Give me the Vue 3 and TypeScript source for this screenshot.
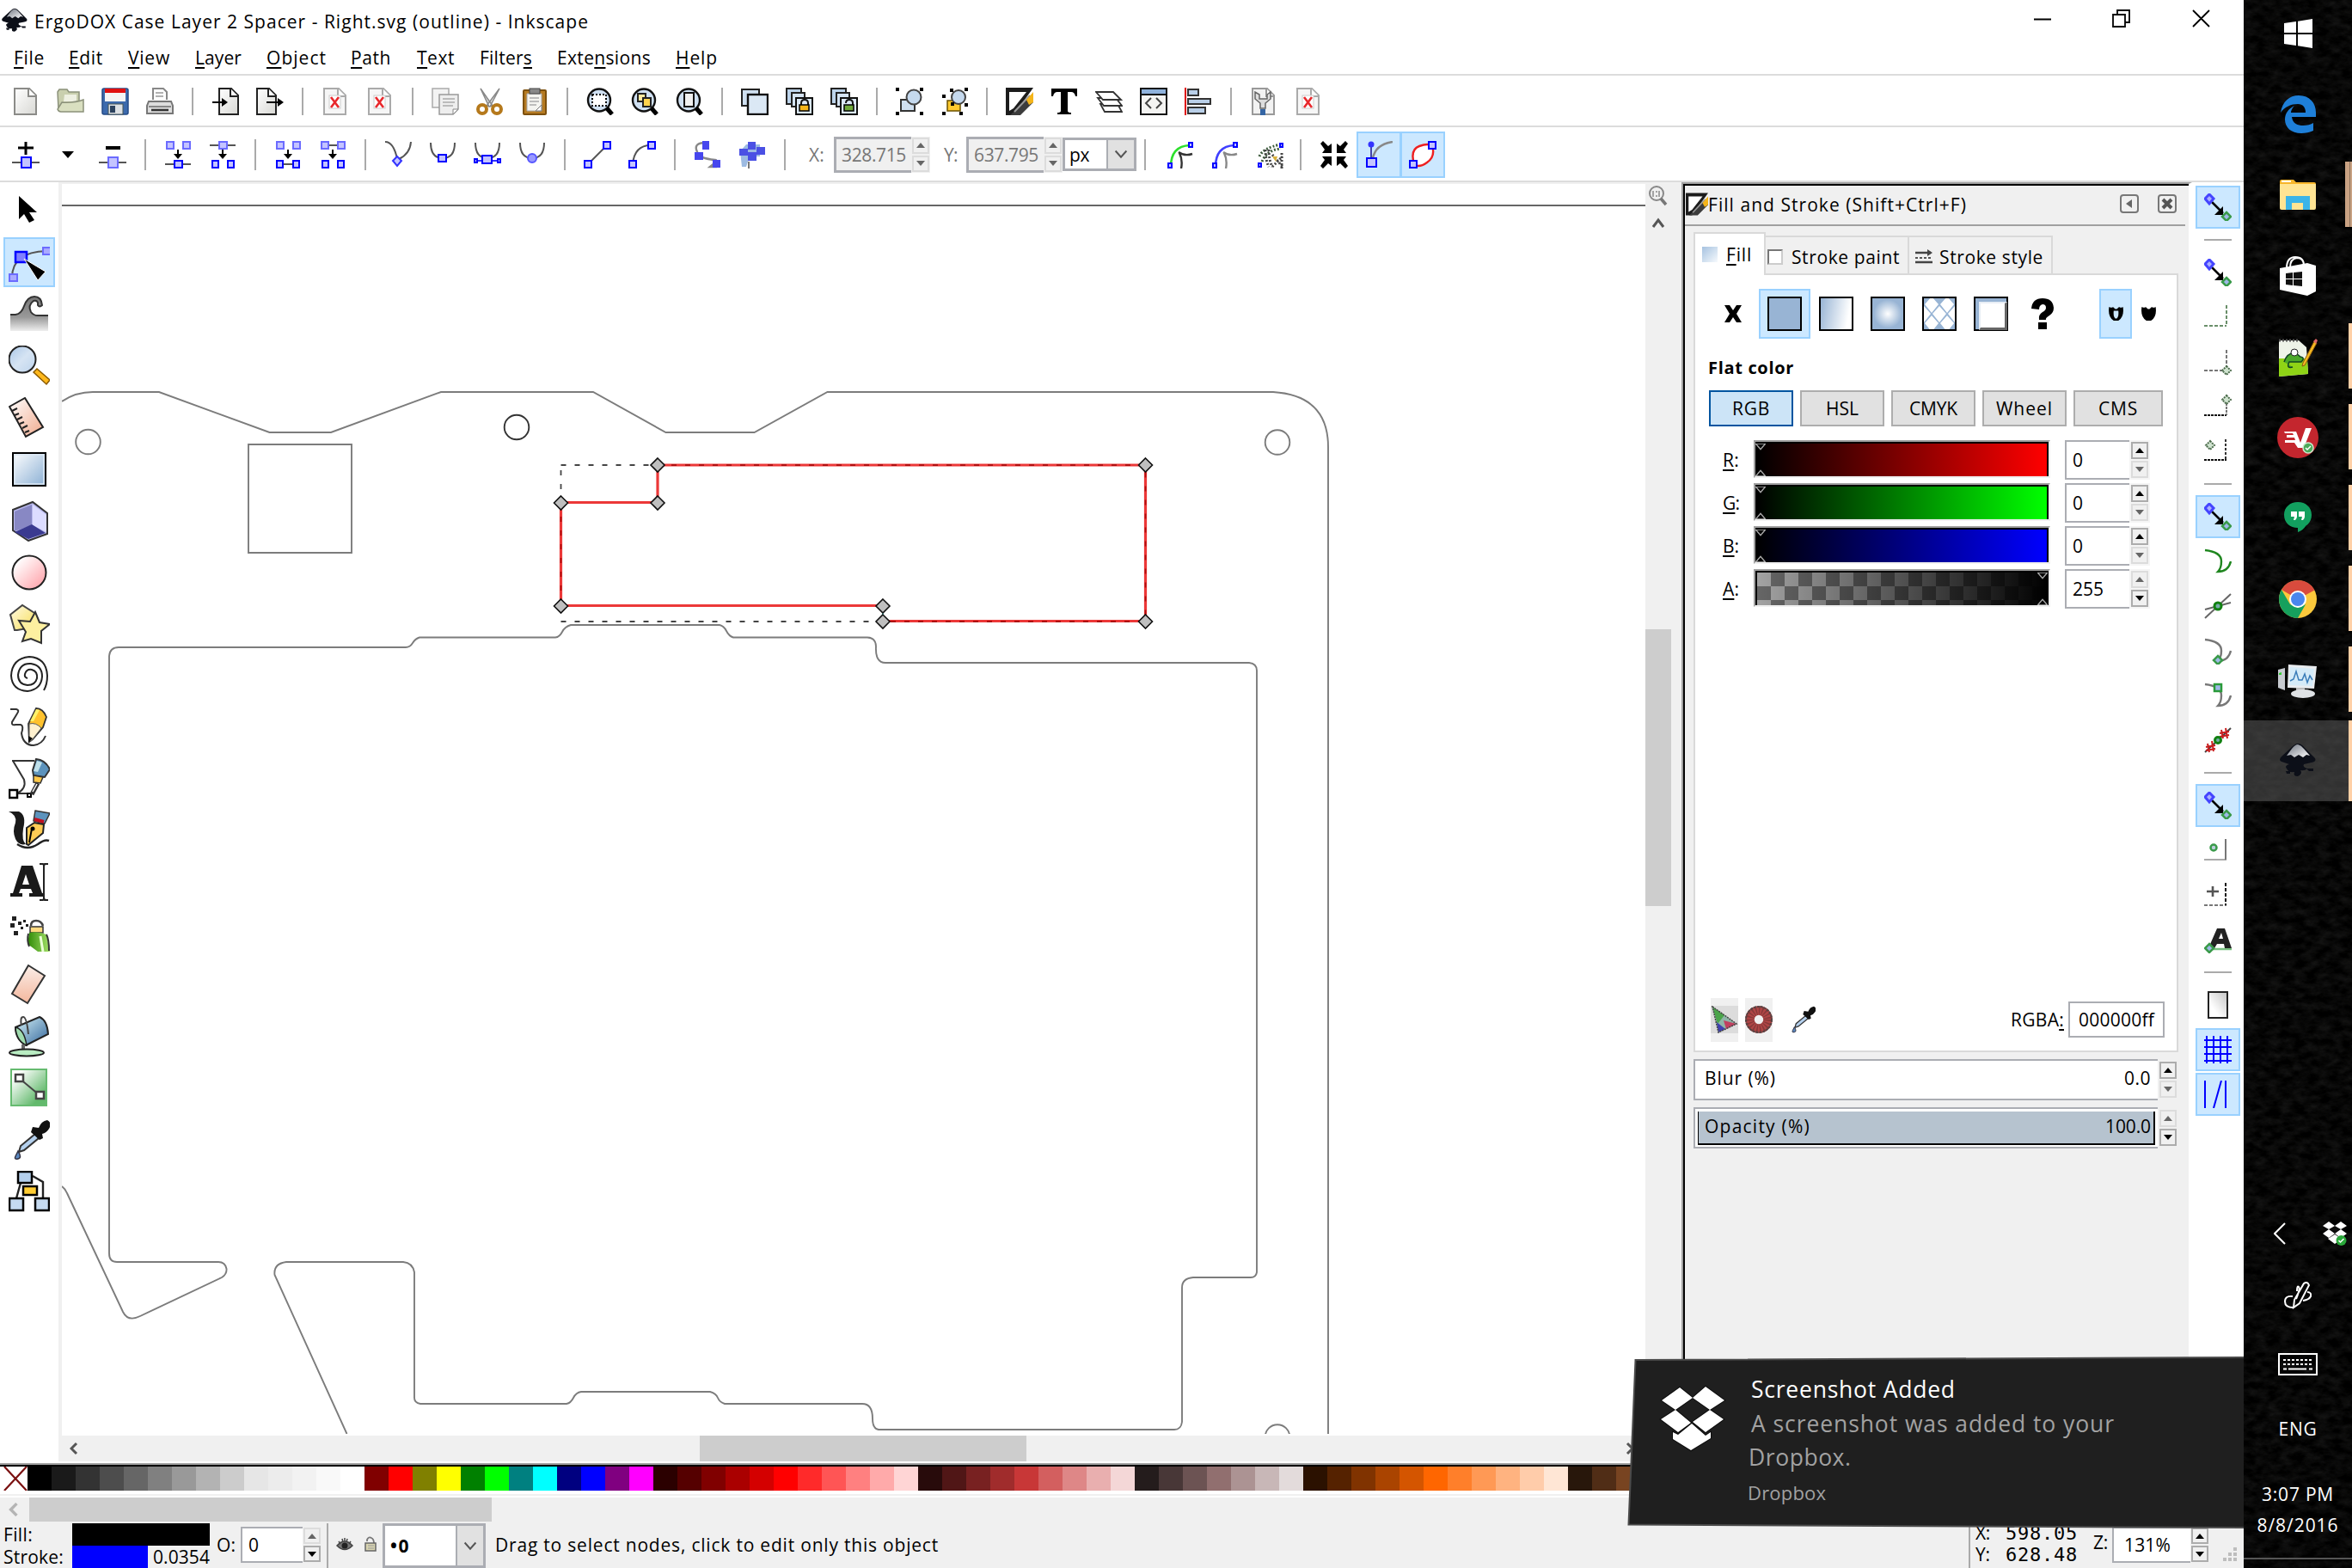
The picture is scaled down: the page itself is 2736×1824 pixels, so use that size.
<script setup lang="ts">
import type { Directive } from 'vue'

/* Tightens or loosens tracking so a label takes exactly the given width. */
const vFit: Directive<HTMLElement, number> = {
  mounted(el, binding) {
    const n = (el.textContent ?? '').trim().length
    const w = el.getBoundingClientRect().width
    el.style.letterSpacing = `${(binding.value - w) / n}px`
    el.style.width = `${binding.value}px`
  },
}

const B = '#0000ff'
const L = '#6b6bff'
const sq = (x: number, y: number, w: number, h: number, c = B) =>
  `<rect x="${x}" y="${y}" width="${w}" height="${h}" fill="#c4c4ff" stroke="${c}" stroke-width="2"/>`
const ln = (d: string, c = '#555', w = 2, extra = '') =>
  `<path d="${d}" fill="none" stroke="${c}" stroke-width="${w}" ${extra}/>`
const down = '<path d="M16 10v6" stroke="#000" stroke-width="2"/><path d="M11 15h10l-5 6z"/>'
const page = (c: string, f = 'url(#gPage)') =>
  `<path d="M3 1h17l8 8v22H3z" fill="${f}" stroke="${c}" stroke-width="2"/><path d="M19 1v9h9" fill="#fff" stroke="${c}" stroke-width="2"/>`
const redX = '<rect x="9" y="9" width="13" height="15" fill="#fff" stroke="#ccc"/><path d="M11 11l9 12M20 11l-9 12" stroke="#e8282c" stroke-width="2.600"/>'
const lens = '<circle cx="15" cy="14.500" r="13" fill="#cfe0f2" stroke="#111" stroke-width="2.400"/><path d="M24 24l6 7" stroke="#000" stroke-width="5"/>'
const clones = '<rect x="1" y="1" width="17" height="18" fill="#bcd3ea" stroke="#222" stroke-width="2"/><rect x="7" y="6" width="15" height="16" fill="#d5e4f3" stroke="#222" stroke-width="2"/><rect x="12" y="12" width="19" height="19" fill="#dbe8f5" stroke="#111" stroke-width="2"/>'

const icons: Record<string, string> = {
  new: page('#8b8b88'),
  open: '<path d="M1 5l2-3h9l2 3h12v20H2z" fill="#c9cfae" stroke="#8b917a" stroke-width="1.500"/><path d="M9 8h14v8H8z" fill="#eef0e2"/><path d="M6 17q14 1 25-3v14H5q-3 0-4-3z" fill="#d9dfc0" stroke="#8b917a" stroke-width="1.500"/>',
  save: '<rect x="1" y="1" width="30" height="30" rx="2" fill="#3c6aad" stroke="#234a86" stroke-width="1.500"/><rect x="4" y="1" width="24" height="15" fill="#f4f4f4"/><rect x="4" y="1" width="24" height="5" fill="#e01010"/><rect x="8" y="19" width="17" height="12" fill="#dce0e4" stroke="#455"/><rect x="10" y="21" width="6" height="8" fill="#2c425e"/>',
  print: '<path d="M8 14V1h12l4 4v9" fill="#fff" stroke="#888" stroke-width="2"/><path d="M11 6h9M11 10h9" stroke="#999" stroke-width="1.500"/><path d="M3 16h26l2 5v9H1v-9z" fill="#ddd" stroke="#777" stroke-width="2"/><path d="M3 22h26" stroke="#888" stroke-width="2"/><path d="M6 26h20" stroke="#333" stroke-width="2.500"/>',
  import: '<path d="M9 1h14l8 8v22H9z" fill="url(#gPage)" stroke="#222" stroke-width="2"/><path d="M22 1v9h9" fill="#fff" stroke="#222" stroke-width="2"/><path d="M1 17h14" stroke="#000" stroke-width="2"/><path d="M12 12l7 5-7 5z"/>',
  export: '<path d="M1 1h14l8 8v22H1z" fill="url(#gPage)" stroke="#222" stroke-width="2"/><path d="M14 1v9h9" fill="#fff" stroke="#222" stroke-width="2"/><path d="M12 17h16" stroke="#000" stroke-width="2"/><path d="M25 12l7 5-7 5z"/>',
  broken: page('#aaa', '#f6f6f6') + redX,
  copy: '<path d="M1 1h19v22H1z" fill="#f3f3f3" stroke="#aaa" stroke-width="1.500"/><path d="M9 8h22v17l-6 6H9z" fill="#eee" stroke="#999" stroke-width="1.500"/><path d="M13 13h14M13 17h14M13 21h12" stroke="#aaa" stroke-width="1.500"/><path d="M31 25h-6v6z" fill="#fff" stroke="#888"/>',
  cut: '<path d="M5 1l14 20-4 1zM27 1L12 21l4 1z" fill="#ddd" stroke="#888" stroke-width="1.500"/><circle cx="7" cy="25" r="5" fill="none" stroke="#b5791c" stroke-width="4"/><circle cx="24" cy="25" r="5" fill="none" stroke="#b5791c" stroke-width="4"/>',
  paste: '<rect x="3" y="3" width="26" height="28" rx="1" fill="#b67b22" stroke="#7d500d" stroke-width="2"/><path d="M7 7h17v20H7z" fill="#f4f4f0" stroke="#aaa"/><rect x="10" y="1" width="12" height="6" fill="#888" stroke="#444"/><path d="M10 12h11M10 16h11M10 20h8" stroke="#aaa" stroke-width="1.500"/><path d="M24 20v7h-7z" fill="#fff" stroke="#777"/>',
  zoomSel: lens + '<rect x="7" y="8" width="16" height="13" fill="#fff" stroke="#000" stroke-width="2" stroke-dasharray="2 2"/>',
  zoomDraw: lens + '<rect x="8" y="7" width="9" height="9" fill="#ffe9a0" stroke="#222" stroke-width="2"/><rect x="14" y="12" width="9" height="10" fill="#ffd34d" stroke="#222" stroke-width="2"/>',
  zoomPage: lens + '<rect x="10" y="6" width="11" height="16" fill="#f0f0f0" stroke="#111" stroke-width="2"/>',
  dup: '<rect x="1" y="2" width="20" height="19" fill="#cfe0f1" stroke="#222" stroke-width="2"/><rect x="8" y="8" width="23" height="23" fill="#dbe8f5" stroke="#111" stroke-width="2.400"/>',
  clone: clones + '<path d="M18 21v-3q0-4 4-4t4 4v3" fill="none" stroke="#111" stroke-width="2"/><rect x="16" y="20" width="11" height="7" fill="#f5b51a" stroke="#000" stroke-width="1.500"/>',
  unlink: clones + '<path d="M18 18q0-4 4-4t4 4v3" fill="none" stroke="#111" stroke-width="2"/><rect x="16" y="20" width="11" height="7" fill="#6fa83a" stroke="#000" stroke-width="1.500"/>',
  group: '<rect x="6" y="14" width="16" height="13" fill="#cfe0f1" stroke="#333" stroke-width="2"/><circle cx="21" cy="11" r="8.500" fill="#c5d9ee" stroke="#444" stroke-width="2"/><path d="M0 0h4v4H0zM28 0h4v4h-4zM0 28h4v4H0zM28 28h4v4h-4z"/>',
  ungroup: '<rect x="8" y="15" width="15" height="12" fill="#ffc92e" stroke="#6b5200" stroke-width="1.500"/><circle cx="21" cy="11" r="8" fill="#c5d9ee" stroke="#444" stroke-width="2"/><path d="M2 8h4v4H2zM11 1h4v4h-4zM28 0h4v4h-4zM28 18h4v4h-4zM2 28h4v4H2zM22 28h4v4h-4zM12 17h4v4h-4z"/>',
  fill: '<path d="M0 0h32L9 32H0z" fill="#1c1c1c"/><path d="M4 5h20L9 24l-5 3z" fill="#fff"/><path d="M32 6v11L17 32H5z" fill="#3c3c3c"/><path d="M28 9L10 28" stroke="#999" stroke-width="2"/><path d="M32 5v12l-5 3-3-6z" fill="#f5b51a"/>',
  text: '<path d="M1 1h30v9h-2q-1-5-5-5h-4v22q0 2 4 2v2H8v-2q4 0 4-2V5H8q-4 0-5 5H1z"/>',
  layers: '<g fill="#fff" stroke="#333" stroke-width="1.800"><path d="M6 19h20l5 9H11z"/><path d="M3 12h21l7 9H10z"/><path d="M1 5h20l9 9H9z"/></g>',
  xml: '<rect x="1" y="1" width="30" height="30" fill="#f4f4f2" stroke="#111" stroke-width="2"/><rect x="2" y="2" width="28" height="5" fill="#8fb2dc"/><path d="M1 8h30" stroke="#111" stroke-width="2"/><path d="M13 12l-6 6 6 6M19 12l6 6-6 6" fill="none" stroke="#444" stroke-width="2"/>',
  align: '<path d="M1 0v32" stroke="#d00" stroke-width="2"/><g fill="#b9cfe8" stroke="#333" stroke-width="2"><rect x="4" y="2" width="12" height="7"/><rect x="4" y="13" width="26" height="6"/><rect x="4" y="23" width="20" height="7"/></g>',
  prefs: page('#999', '#f2f2f2') + '<path d="M6 5v8l6 5v6h6v-6l6-5V5l-4 3v5h-9V8z" fill="#ddd" stroke="#666" stroke-width="1.500"/><rect x="12" y="25" width="6" height="7" fill="#3465a4"/>',

  nAdd: ln('M16 1v15M7 8h18', '#000', 3) + ln('M0 25h32') + sq(11, 19, 11, 12),
  nDel: ln('M8 8h17', '#000', 4) + ln('M0 25h32') + sq(11, 19, 11, 12, L),
  nJoin: sq(3, 1, 8, 8, L) + sq(22, 1, 8, 8, L) + down + ln('M1 27h30') + sq(12, 23, 9, 8),
  nBreak: ln('M1 5h30') + sq(12, 1, 9, 8, L) + down + sq(4, 23, 7, 8) + sq(22, 23, 7, 8),
  nJoinSeg: sq(3, 1, 8, 8, L) + sq(22, 1, 8, 8, L) + down + ln('M10 27h12') + sq(3, 23, 7, 8) + sq(22, 23, 7, 8),
  nDelSeg: ln('M10 5h12') + sq(3, 1, 8, 8, L) + sq(22, 1, 8, 8, L) + down + sq(4, 23, 7, 8) + sq(22, 23, 7, 8),
  cusp: ln('M1 1q10 0 14 20M17 21q13-6 14-20') + '<path d="M15 18l5 5-5 6-5-6z" fill="#c4c4ff" stroke="#33f" stroke-width="2"/>',
  smooth: ln('M2 2q0 18 14 18T30 2') + sq(11, 16, 9, 8),
  symm: ln('M2 2q0 18 14 18T30 2') + ln('M3 23h26', '#33f') + sq(10, 17, 11, 9) + sq(1, 21, 3, 4) + sq(28, 21, 3, 4),
  auto: ln('M2 2q0 18 14 18T30 2') + '<circle cx="16" cy="20" r="5" fill="#99f" stroke="#55f" stroke-width="2"/>',
  seg: ln('M5 27L27 5') + sq(1, 23, 8, 8) + sq(23, 1, 8, 8),
  curve: ln('M5 27Q7 5 26 5') + sq(1, 23, 8, 8) + sq(23, 1, 8, 8),
  o2p: ln('M14 2Q1 2 3 10t10 10 12 2-6 8h8', '#888', 2.4) + '<path d="M10 0h8v10h-8zM1 13h10v9H1zM22 22h9v9h-9z" fill="#4646ee"/>',
  s2p: '<path d="M9 4h16v14H13l-4 12H4L2 12z" fill="#9dbbe2"/><path d="M11 1h9v9h-9zM21 7h10v9H21zM1 9h10v8H1zM11 13h10v10H11z" fill="#4a50e4"/><path d="M12 24v8" stroke="#777" stroke-width="2"/>',
  e1: ln('M4 30Q4 6 26 5', '#2ee02e', 2.6) + ln('M13 13q7 5 16 2M14 14q4 8 2 18', '#333', 2.4) + sq(1, 26, 4, 5) + sq(25, 2, 4, 5),
  e2: ln('M4 30Q4 6 26 5', '#4040ff', 2.6) + ln('M13 13q7 5 16 2M14 14q4 8 2 18', '#888', 2.4) + sq(1, 26, 4, 5) + sq(25, 2, 4, 5),
  e3: ln('M3 18Q7 8 28 4M6 24Q12 10 28 9', '#3b5a3b', 3, 'stroke-dasharray="2 2"') + ln('M10 10q0 12 4 20M14 10q0 12 4 20M18 16l12 14M18 30l12-12M29 14v18', '#444', 3, 'stroke-dasharray="2 2"') + sq(2, 26, 3, 4) + sq(27, 3, 3, 4) + '<path d="M18 18h6l-2 6z" fill="#d8b03a"/>',
  e4: '<path d="M0 3l3-3 6 6 4-3v11H2l3-4zM32 3l-3-3-6 6-4-3v11h11l-3-4zM0 29l3 3 6-6 4 3V18H2l3 4zM32 29l-3 3-6-6-4 3V18h11l-3 4z"/>',
  e5: ln('M9 20Q12 4 32 1', '#888', 2.5) + ln('M7 4v18', '#44a', 2) + sq(2, 20, 11, 10) + '<circle cx="7" cy="4" r="3.500" fill="#33f"/>',
  e6: '<path d="M6 27Q1 10 12 6t15 0q4 12-6 19t-15 2z" fill="#fff" stroke="#ee2020" stroke-width="2.400"/>' + sq(1, 23, 8, 8) + sq(23, 1, 8, 8),
}

const tools: string[] = [
  '<path d="M12 6v27l6-6 6 10 6-3-6-9h9z"/>',
  '<path d="M4 42Q4 12 44 11" fill="none" stroke="#555" stroke-width="2"/><rect x="40" y="7" width="9" height="8" fill="#aaaaff" stroke="#6b6bff" stroke-width="2"/><rect x="1" y="38" width="9" height="8" fill="#aaaaff" stroke="#6b6bff" stroke-width="2"/><rect x="8" y="12" width="13" height="12" fill="#8080ff" stroke="#00f" stroke-width="2.500"/><path d="M18 20l25 15-9 10z" stroke="#fff"/>',
  '<path d="M2 24h6Q15 23 18 14 22 3 30 3q8 0 9 10-3 3-5 0 1-6-5-5-7 5-3 13 3 4 8 4h12v18H2z" fill="url(#gWave)"/><path d="M2 24h6Q15 23 18 14 22 3 30 3q8 0 9 10-3 3-5 0 1-6-5-5-7 5-3 13 3 4 8 4h12" fill="none" stroke="#333" stroke-width="2"/>',
  '<path d="M29 31l4-4 15 13-4 5z" fill="#ffb81c" stroke="#8a5a00" stroke-width="1.500"/><circle cx="16" cy="16" r="15.500" fill="url(#gBlue)" stroke="#222" stroke-width="2"/>',
  '<path d="M1 11l18-10 21 34-20 11z" fill="url(#gPeach)" stroke="#222" stroke-width="2"/><path d="M4 16l6-3M7 21l5-2M10 26l6-3M13 31l5-2M16 36l6-3M19 41l5-2" stroke="#222" stroke-width="2"/>',
  '<rect x="5" y="5" width="38" height="38" fill="url(#gBlue2)" stroke="#000" stroke-width="2"/><rect x="7" y="7" width="34" height="34" fill="none" stroke="#dde9f5" stroke-width="1.500"/>',
  '<path d="M5 11l23-9 17 13v24l-22 8L5 35z" fill="#b9b9ee" stroke="#333" stroke-width="2"/><path d="M7 13l20-8v24L7 36z" fill="#8888c4"/><path d="M28 5l16 12v20L28 29z" fill="#dcdcff"/><path d="M7 37l20-9 16 10-20 7z" fill="#3a3a90"/>',
  '<circle cx="24" cy="24" r="19.500" fill="url(#gPink)" stroke="#222" stroke-width="2"/>',
  '<path d="M2 13L16 2l14 9-2 17-18 3H7z" fill="url(#gYel)" stroke="#444" stroke-width="2"/><path d="M31 10l5 12 12 2-10 8v14l-12-5-10 3 4-11-8-13 13 1z" fill="#fdf0a0" stroke="#333" stroke-width="2"/>',
  '<path d="M22 27q-4-1-3-5 2-6 8-5 7 2 6 10-2 8-11 8-11-1-11-12Q13 9 26 10q13 2 13 15-1 15-17 17Q4 41 3 24 4 4 24 2q20 1 21 22 0 10-4 17" fill="none" stroke="#222" stroke-width="2" stroke-linejoin="round"/>',
  '<path d="M2 3h7q4 1 1 5L4 18q-1 4 4 3h6q4 1 1 10 2 14 14 14 10-1 14-11" fill="none" stroke="#333" stroke-width="2"/><path d="M32 2q8 0 12 10L40 24 28 38l-4 3-1-21z" fill="#ffc22e" stroke="#333" stroke-width="1.800"/><path d="M24 20q8-2 14 5L27 39l-3 2z" fill="#fff1cf" stroke="#555"/><path d="M23 34l5 3-5 5z"/><path d="M32 3l-7 14 4 0 7-13z" fill="#fff36b"/>',
  '<path d="M4 3h26M5 3l13 22q3 10-8 16h20" fill="none" stroke="#333" stroke-width="2"/><rect x="1" y="37" width="9" height="9" fill="#fff" stroke="#000" stroke-width="2.500"/><rect x="22" y="41" width="4" height="4" fill="#fff" stroke="#000" stroke-width="2"/><path d="M32 1q11 1 16 12l-6 9-13-2-1-6z" fill="#5c93bd" stroke="#333" stroke-width="2"/><path d="M33 3l-4 12 5 1 5-11z" fill="#bfe0ea"/><path d="M29 20l11 2-3 7-8-1z" fill="#ffc84a" stroke="#333" stroke-width="1.500"/><path d="M34 29l-7 13" stroke="#333" stroke-width="5"/><path d="M33 30l-5 9" stroke="#fff" stroke-width="1.500"/>',
  '<path d="M0 2h12q9 4 5 20-2 14 3 18-8 2-12-6-4-9 0-19Q10 6 0 2z" fill="#1a1a1a"/><path d="M10 40q12 8 24 0 8-6 13-4" fill="none" stroke="#222" stroke-width="2.500"/><path d="M31 1l17 3-6 12-13-3z" fill="#5c93bd" stroke="#333" stroke-width="1.500"/><path d="M30 11l11 3" stroke="#c01020" stroke-width="4"/><path d="M21 21l9-6 11 2-1 10-17 14-2-1z" fill="#ffcc55" stroke="#222" stroke-width="2"/><path d="M27 22l-3 16" stroke="#000" stroke-width="2"/><circle cx="28" cy="22" r="2.500"/>',
  '<path d="M2 41v-4h3L15 5h13l11 32h3v4H24v-4h4l-2-5H14l-2 5h4v4zM16 27h8l-4-12z" fill="#1a1a1a"/><path d="M36 3h4q1 1 1 2t1-2h4M36 45h4q1-1 1-2t1 2h4M41 5v38" fill="none" stroke="#222" stroke-width="2"/>',
  '<path d="M4 4h5v5H4zM2 12h5v5H2zM6 21h5v5H6zM11 10h4v4h-4zM14 16h3v3h-3zM17 8h3v3h-3zM20 13h3v3h-3z" fill="#222"/><path d="M26 15q0-6 6-6t8 6" fill="none" stroke="#444" stroke-width="2.500"/><path d="M25 16h15v7H25z" fill="#ffd980" stroke="#333" stroke-width="1.500"/><path d="M24 23q10-2 20 2l4 20H34L22 36z" fill="url(#gGreen)"/><path d="M23 24q-2 8 1 15M44 25q3 6 3 19" fill="none" stroke="#333" stroke-width="2"/><path d="M37 27l3 18" stroke="#eaffd5" stroke-width="3"/>',
  '<path d="M23 1l19 12-20 32L4 34z" fill="url(#gPeach2)" stroke="#333" stroke-width="2"/>',
  '<path d="M8 13l28-12q9 4 10 20L20 34Q8 27 8 13z" fill="url(#gCan)" stroke="#222" stroke-width="2"/><path d="M8 13q10 2 13 21Q9 29 8 13z" fill="#9fdcae" stroke="#222" stroke-width="1.500"/><path d="M15 11q-2-10 2-10t6 20" fill="none" stroke="#444" stroke-width="2"/><path d="M17 33v8" stroke="#666" stroke-width="4"/><ellipse cx="21" cy="42.500" rx="20" ry="4" fill="#b9ecc2" stroke="#222" stroke-width="2"/>',
  '<rect x="3" y="2" width="41" height="42" fill="url(#gGrad)" stroke="#66bb70" stroke-width="2"/><path d="M12 12l24 20" stroke="#444" stroke-width="2"/><rect x="8" y="8" width="9" height="8" fill="#fff" stroke="#444" stroke-width="2.500"/><rect x="32" y="28" width="9" height="8" fill="#fff" stroke="#444" stroke-width="2.500"/>',
  '<path d="M31 17l4 5-17 14-6 2 2-7z" fill="#b4d0ee" stroke="#333" stroke-width="2"/><path d="M28 9l7 1q3-8 10-9 6 3 2 10-3 5-8 6l1 5-4 2-10-9z" fill="#111"/><path d="M11 37q5 8 0 9t-3-3z" fill="#5a88c0" stroke="#334" stroke-width="1.500"/>',
  '<path d="M14 14L9 32M28 6l12 7v20" fill="none" stroke="#222" stroke-width="2.400"/><g stroke="#000" stroke-width="2.500"><rect x="11" y="1" width="16" height="13" fill="#b4cfec"/><rect x="17" y="18" width="16" height="10" fill="#ffcc33"/><rect x="1" y="32" width="16" height="14" fill="#c5daf0"/><rect x="31" y="32" width="16" height="14" fill="#c5daf0"/></g>',
]

const gn = (x: number, y: number) => `<path d="M${x} ${y - 5}l5 5-5 5-5-5z" fill="#9fb8e8" stroke="#3a9a4a" stroke-width="2.500"/>`
const dg = (x: number, y: number) => `<path d="M${x} ${y - 5}l5 5-5 5-5-5z" fill="#cfe3cf" stroke="#4a6a4a" stroke-width="2" stroke-dasharray="2 1"/>`
const snapMain = '<path d="M9 10l13 13" stroke="#000" stroke-width="2.500"/><path d="M22 15v10H12z"/><path d="M6 1l5 5-5 6-5-6z" fill="#aab0ff" stroke="#4444ff" stroke-width="3"/>' + gn(26, 27)
const corner = (c: string) => ln('M0 26h26M26 2v24', c, 2, 'stroke-dasharray="4 2"')
const hook = (c: string) => ln('M1 3Q20 5 20 16q0 8-4 12 12 0 15-12', c, 2.4)
type Snap = { svg?: string; on?: boolean }
const snaps: Snap[] = [
  { svg: snapMain, on: true }, {},
  { svg: snapMain },
  { svg: corner('#6a8f6a') },
  { svg: corner('#777') + dg(26, 26) },
  { svg: ln('M0 26h26', '#111', 2, 'stroke-dasharray="3 1"') + ln('M26 12v14', '#777', 2, 'stroke-dasharray="3 1"') + dg(26, 8) },
  { svg: ln('M0 26h26', '#111', 2, 'stroke-dasharray="3 1"') + ln('M25 2v24', '#333', 2, 'stroke-dasharray="3 2"') + dg(7, 9) }, {},
  { svg: snapMain, on: true },
  { svg: hook('#1f861f') },
  { svg: ln('M1 30L31 2M1 20l30-8', '#666') + '<circle cx="16" cy="16" r="4" fill="#7aa" stroke="#118011" stroke-width="3"/>' },
  { svg: hook('#777') + gn(16, 27) },
  { svg: hook('#777') + '<rect x="12" y="3" width="8" height="8" fill="#9fb8e8" stroke="#2a9a3a" stroke-width="2.500"/>' },
  { svg: ln('M1 30L31 2', '#444') + ln('M4 20l2 10M9 17l2 12M2 24l11-2M2 28l11-2M20 4l2 10M25 2l2 12M18 8l11-2M18 12l11-2', '#c81e1e', 2) + '<circle cx="16" cy="16" r="3.500" fill="#7aa" stroke="#118011" stroke-width="3"/>' }, {},
  { svg: snapMain, on: true },
  { svg: ln('M0 27h26', '#aaa') + ln('M25 3v24', '#777') + '<circle cx="11" cy="13" r="3.500" fill="#bcd" stroke="#3a9a4a" stroke-width="2.500"/>' },
  { svg: ln('M0 28h26', '#777', 2, 'stroke-dasharray="4 2"') + ln('M25 2v26', '#111', 2, 'stroke-dasharray="4 2"') + ln('M3 12h14M10 6v12', '#555', 2.6) },
  { svg: '<path d="M4 27h28" stroke="#77c080" stroke-width="2.500"/><path d="M5 26L15 3h9l8 23h-8l-1-5h-8l-3 5zM17 15h5l-2-7z" fill="#222"/>' + gn(6, 26) }, {},
  { svg: '<rect x="5" y="1" width="22" height="30" fill="url(#gPage2)" stroke="#222" stroke-width="2"/>' },
  { svg: ln('M0 5h32M0 13h32M0 21h32M0 29h32M3 0v32M11 0v32M19 0v32M27 0v32', B), on: true },
  { svg: ln('M1 0v32M25 0v32M20 0L11 32', B), on: true },
]

const menus: [string, string, string, number, number][] = [
  ['', 'F', 'ile', 36, 28], ['', 'E', 'dit', 40, 29], ['', 'V', 'iew', 49, 29], ['', 'L', 'ayer', 54, 29],
  ['', 'O', 'bject', 70, 28], ['', 'P', 'ath', 47, 30], ['', 'T', 'ext', 44, 29], ['Filter', 's', '', 61, 29],
  ['Exte', 'n', 'sions', 109, 29], ['', 'H', 'elp', 49, 0],
]

const bar1 = ['new', 'open', 'save', 'print', '|', 'import', 'export', '|', 'broken', 'broken', '|', 'copy', 'cut', 'paste', '|',
  'zoomSel', 'zoomDraw', 'zoomPage', '|', 'dup', 'clone', 'unlink', '|', 'group', 'ungroup', '|', 'fill', 'text', 'layers', 'xml', 'align', '|', 'prefs', 'broken']
const bar2 = ['nAdd', 'v', 'nDel', '|', 'nJoin', 'nBreak', '|', 'nJoinSeg', 'nDelSeg', '|', 'cusp', 'smooth', 'symm', 'auto', '|', 'seg', 'curve', '|', 'o2p', 's2p', '|']

const palette = ('000 1a1a1a 333 4d4d4d 666 808080 999 b3b3b3 ccc e6e6e6 ececec f2f2f2 f9f9f9 fff 800000 f00 808000 ff0 008000 0f0 008080 0ff 000080 00f 800080 f0f '
  + '2b0000 550000 800000 a00 d40000 f00 ff2a2a f55 ff8080 faa ffd5d5 280b0b 501616 782121 a02c2c c83737 d35f5f de8787 e9afaf f4d7d7 '
  + '241c1c 483737 6c5353 916f6f ac9393 c8b7b7 e3dbdb 2b1100 520 803300 a40 d45500 f60 ff7f2a f95 ffb380 fca ffe6d5 28170b 502d16 784421').split(' ')

const modes: [string, number][] = [['RGB', 44], ['HSL', 38], ['CMYK', 56], ['Wheel', 66], ['CMS', 46]]
const channels = [
  { k: 'R', c: 'linear-gradient(90deg,#000,#f00)', v: '0', w: 12 },
  { k: 'G', c: 'linear-gradient(90deg,#000,#0f0)', v: '0', w: 12 },
  { k: 'B', c: 'linear-gradient(90deg,#000,#00f)', v: '0', w: 12 },
  { k: 'A', c: 'linear-gradient(90deg,rgba(0,0,0,0),#000), conic-gradient(#666 25%,#a3a3a3 0 50%,#666 0 75%,#a3a3a3 0) 0 0/32px 32px', v: '255', w: 36 },
]

const nodes: [number, number][] = [[765, 541], [1332.5, 541], [1332.5, 723], [1027, 723], [1027, 705], [652.5, 705], [652.5, 585], [765, 585]]

type Task = { svg: string; lit?: boolean; on?: boolean }
const tasks: Task[] = [
  { svg: '<path d="M8 12l14-2v13H8zM24 9.700L41 7v16H24zM8 25h14v13L8 36zM24 25h17v16l-17-2.700z" fill="#fff"/>' },
  { svg: '<path d="M4 22C6 9 14 2 25 2c13 0 20 9 20 20v5H17c1 8 7 10 13 10 5 0 9-1 12-3v9c-4 2-9 3-14 3C16 46 9 39 9 30c0-8 5-13 11-16-3 3-4 6-4 8h17c0-6-3-10-9-10C16 12 9 15 4 22z" fill="#1e7fd8"/>' },
  { svg: '<path d="M3 8q0-2 2-2h14l3 3h21q2 0 2 2v5H3z" fill="#f7b52a"/><path d="M3 11h42v28q0 2-2 2H5q-2 0-2-2z" fill="#ffe493"/><path d="M10 41V25h28v16h-8v-8H17v8z" fill="#3bb4e8"/><path d="M5 8h11" stroke="#fff" stroke-width="2"/>', lit: true },
  { svg: '<path d="M3 15l32-6 10 3v30l-10 5-32-7z" fill="#fff"/><path d="M11 15q0-13 10-13t10 10M15 14q0-10 8-11 8 0 8 9" fill="none" stroke="#fff" stroke-width="2"/><path d="M10 21l8-1v7h-8zM19 20l10-1v8H19zM10 28h8v7l-8-1zM19 28h10v8l-10-1z" fill="#111"/>' },
  { svg: '<path d="M2 5h23l9 8 2 31-34 3z" fill="#eef3e8"/><path d="M2 26h33l1 18-34 3z" fill="#8fd416"/><path d="M2 5h22" stroke="#555" stroke-width="3" stroke-dasharray="2 2"/><path d="M8 30q4-12 14-10l5 4q6 1 1 6H14q-4 8 4 6" fill="#4ba829" stroke="#142" stroke-width="1.500"/><circle cx="20" cy="19" r="4" fill="#fff" stroke="#222"/><path d="M43 6l3 2-14 26-3 1 1-4z" fill="#f5b820" stroke="#8b5a10"/><path d="M42 6l3-3 2 2-2 4z" fill="#d66"/>', lit: true },
  { svg: '<circle cx="24" cy="24" r="24" fill="#c4262e"/><path d="M8 17h14l5 13 6-17h7l-9 23h-7l-4-6H9v-3h12l-1-3h-9v-3h8l-1-2H9z" fill="#fff"/><circle cx="36" cy="36" r="6" fill="#4ca95a" stroke="#cde8d0" stroke-width="1.500"/><path d="M33 36l2 2 4-4" fill="none" stroke="#fff" stroke-width="1.500"/>', lit: true },
  { svg: '<path d="M24 5c9 0 16 6 16 15S33 35 25 35v5l-1-5C15 35 8 29 8 20S15 5 24 5z" fill="#12a05f"/><path d="M24 33h9q-3 5-9 7z" fill="#12a05f"/><path d="M16 16h7v6q0 2-2 4h-2l1-4h-4zM25 16h7v6q0 2-2 4h-2l1-4h-4z" fill="#fff"/>', lit: true },
  { svg: '<circle cx="24" cy="24" r="22" fill="#fbc93c"/><path d="M24 24L5 13a22 22 0 0 1 38.500 0.500z" fill="#d94b3d"/><path d="M5 13a22 22 0 0 0 19 33l9-16-9 4-9-4z" fill="#16a05d"/><circle cx="24" cy="24" r="10" fill="#fff"/><circle cx="24" cy="24" r="8" fill="#4a86ee"/>', lit: true },
  { svg: '<path d="M1 12l8-2v26l-8-3z" fill="#c7cbd0"/><path d="M13 6l33 2-3 26-31-1z" fill="#e9ecef"/><path d="M15 9l28 2-2 20-27-1z" fill="#d5ebf8"/><path d="M15 25l4-2 3-9 3 10 4 0 3-7 3 10 3-8 3 5" fill="none" stroke="#3a7cb8" stroke-width="1.500"/><path d="M22 33h10v5H22z" fill="#bbb"/><ellipse cx="30" cy="40" rx="14" ry="5" fill="#dfe2e5"/><path d="M2 16l3-1v3l-3 0z" fill="#3c3"/>', lit: true },
  { svg: '<path d="M24 4q4 0 8 5l12 12q2 4-4 5l-9 2q-2 3 4 5-3 3-8 2 3 4-3 7-6 0-4-5-7 1-9-4-3-3 3-5L5 25q-4-2 0-6L17 8q4-4 7-4z" fill="#0c0f18"/><path d="M24 5q4 1 7 5l7 8-4-1-4 3-5-3-5 3-4-3-5 1 6-8q4-5 7-5z" fill="url(#gInk)"/><path d="M34 33h8v3h-5zM10 36h5v3h-4z" fill="#0c0f18"/>', lit: true, on: true },
]
</script>

<template>
  <div class="desktop">
    <svg class="defs" width="0" height="0">
      <defs>
        <linearGradient id="gPage" x1="0" y1="0" x2="1" y2="1"><stop offset="0" stop-color="#fff" /><stop offset="1" stop-color="#d8d8d4" /></linearGradient>
        <linearGradient id="gPage2" x1="1" y1="0" x2="0" y2="1"><stop offset="0" stop-color="#c4c4c4" /><stop offset=".7" stop-color="#fff" /></linearGradient>
        <linearGradient id="gInk" x1="0" y1="0" x2="1" y2="1"><stop offset=".2" stop-color="#8a8f98" /><stop offset="1" stop-color="#fff" /></linearGradient>
        <linearGradient id="gWave" x1="0" y1="0" x2="0" y2="1"><stop offset="0" stop-color="#777" /><stop offset=".6" stop-color="#999" /><stop offset="1" stop-color="#eee" /></linearGradient>
        <linearGradient id="gBlue" x1="0" y1="0" x2="1" y2="1"><stop offset="0" stop-color="#a9c6e6" /><stop offset=".5" stop-color="#d6e4f3" /><stop offset="1" stop-color="#bdd3ec" /></linearGradient>
        <linearGradient id="gBlue2" x1="0" y1="0" x2="1" y2="1"><stop offset="0" stop-color="#fff" /><stop offset="1" stop-color="#8aafd4" /></linearGradient>
        <linearGradient id="gPeach" x1="0" y1="0" x2="1" y2="1"><stop offset="0" stop-color="#fff" /><stop offset="1" stop-color="#f0a98c" /></linearGradient>
        <linearGradient id="gPeach2" x1="0" y1="0" x2="0" y2="1"><stop offset="0" stop-color="#fbeee8" /><stop offset="1" stop-color="#f4b79d" /></linearGradient>
        <linearGradient id="gPink" x1="0" y1="0" x2="1" y2="1"><stop offset=".15" stop-color="#fff" /><stop offset="1" stop-color="#ff9aa2" /></linearGradient>
        <linearGradient id="gYel" x1="0" y1="0" x2="1" y2="1"><stop offset="0" stop-color="#fffbe6" /><stop offset="1" stop-color="#f7de5a" /></linearGradient>
        <linearGradient id="gGreen" x1="0" y1="0" x2="1" y2="0"><stop offset="0" stop-color="#2f8a06" /><stop offset="1" stop-color="#a6e26a" /></linearGradient>
        <linearGradient id="gCan" x1="0" y1="0" x2="1" y2="1"><stop offset=".2" stop-color="#b7d8e6" /><stop offset="1" stop-color="#33669c" /></linearGradient>
        <linearGradient id="gGrad" x1="0" y1="0" x2="1" y2="1"><stop offset=".15" stop-color="#fff" /><stop offset=".8" stop-color="#62b96c" /></linearGradient>
        <filter id="stone" x="0" y="0" width="1" height="1" color-interpolation-filters="sRGB">
          <feTurbulence type="fractalNoise" baseFrequency=".07 .12" numOctaves="4" seed="7" />
          <feColorMatrix type="matrix" values=".14 0 0 0 -.042 .14 0 0 0 -.042 .14 0 0 0 -.044 0 0 0 0 1" />
        </filter>
      </defs>
    </svg>

    <div class="window">
      <header class="title">
        <svg class="app-ico" viewBox="0 0 48 48" v-html="tasks[9].svg"></svg>
        <span v-fit="645">ErgoDOX Case Layer 2 Spacer - Right.svg (outline) - Inkscape</span>
        <svg class="winbtns" viewBox="0 0 210 24">
          <path d="M2 12.500h20M94 7h14v14H94zM99 7V2h14v14h-5M187 2l19 19M206 2l-19 19" fill="none" stroke="#000" stroke-width="1.800" />
        </svg>
      </header>
      <nav class="menu">
        <span v-for="m in menus" :key="m[1] + m[2]" class="mi" :style="{ marginRight: m[4] + 'px' }"><span v-fit="m[3]">{{ m[0] }}<u>{{ m[1] }}</u>{{ m[2] }}</span></span>
      </nav>

      <div class="bar bar1">
        <template v-for="(n, i) in bar1" :key="i">
          <i v-if="n === '|'" class="vs"></i>
          <span v-else class="cell"><svg class="i32" viewBox="0 0 32 32" v-html="icons[n]"></svg></span>
        </template>
      </div>

      <div class="bar bar2">
        <template v-for="(n, i) in bar2" :key="i">
          <i v-if="n === '|'" class="vs"></i>
          <span v-else-if="n === 'v'" class="cell drop"><i class="tri"></i></span>
          <span v-else class="cell"><svg class="i32" viewBox="0 0 32 32" v-html="icons[n]"></svg></span>
        </template>
        <span class="coord cx"><b v-fit="18">X:</b></span>
        <span class="field off"><span v-fit="75">328.715</span><span class="spin off"><i class="up"></i><i class="dn"></i></span></span>
        <span class="coord cy"><b v-fit="16">Y:</b></span>
        <span class="field off"><span v-fit="75">637.795</span><span class="spin off"><i class="up"></i><i class="dn"></i></span></span>
        <span class="combo unit"><span v-fit="23">px</span><i class="chev"><svg viewBox="0 0 20 12"><path d="M2 1l8 9 8-9" fill="none" stroke="#555" stroke-width="2.500" /></svg></i></span>
        <i class="vs s2"></i>
        <span v-for="n in ['e1', 'e2', 'e3']" :key="n" class="cell"><svg class="i32" viewBox="0 0 32 32" v-html="icons[n]"></svg></span>
        <i class="vs s3"></i>
        <span class="cell"><svg class="i32" viewBox="0 0 32 32" v-html="icons.e4"></svg></span>
        <span class="cell act"><svg class="i32" viewBox="0 0 32 32" v-html="icons.e5"></svg></span>
        <span class="cell act"><svg class="i32" viewBox="0 0 32 32" v-html="icons.e6"></svg></span>
      </div>

      <main class="main">
        <aside class="toolbox">
          <span v-for="(t, i) in tools" :key="i" class="tool" :class="{ act: i === 1 }"><svg viewBox="0 0 48 48" v-html="t"></svg></span>
        </aside>

        <section class="view">
          <div class="viewrow">
            <svg class="canvas" viewBox="72 214 1842 1454" width="1842" height="1454">
              <path d="M72 239H1914" stroke="#666" stroke-width="2" />
              <g fill="none" stroke="#7c7c7c" stroke-width="1.900">
                <path d="M72 467Q88 456 108 456H185L313.500 503H385L513 456H690L774.500 503H877.500L962.500 456H1481Q1545 460 1545 520V1668" />
                <circle cx="102.500" cy="514" r="14.300" /><circle cx="1486" cy="514.500" r="14.300" /><circle cx="1486" cy="1671.500" r="14.300" />
                <circle cx="601" cy="497" r="14.300" stroke="#333" />
                <path d="M289 517H409V643H289z" />
                <path d="M72 1380Q76 1383 78 1388L143 1526Q149 1538 163 1531L258 1486Q264 1482 263.500 1476 262 1468 254 1468H136Q127 1468 127 1458V763Q128 753 138 753H472Q477 753 480 748T488 741.500H646Q651 741 654 735T664 727H837Q842 728 845 734T853 741.500H1009Q1019 742 1019 752 1018 771 1030 771H1453Q1462 772 1462 780V1480Q1461 1486 1455 1486H1388Q1375 1487 1375 1498V1654Q1374 1663 1366 1663H1022Q1015 1662 1015 1650 1015 1633 1003 1633H843Q837 1631 835 1626T826 1619H676Q670 1620 667 1626T659 1633H489Q482 1632 482 1626V1480Q480 1469 469 1468H333Q318 1470 319.500 1483L403.500 1668" />
              </g>
              <path d="M652.500 541H1332.500V723H652.500z" fill="none" stroke="#444" stroke-width="1.800" stroke-dasharray="6 10" />
              <path d="M1027 705V723" stroke="#7ff" stroke-width="2" />
              <path d="M1027 704.500H652.500V584.500H765V541H1332.500V722.500H1027" fill="none" stroke="#ec3838" stroke-width="3.200" />
              <path d="M765 541H1332.500V723H1027M652.500 585V705" fill="none" stroke="#b01010" stroke-width="1.800" stroke-dasharray="6 10" />
              <path v-for="(p, i) in nodes" :key="i" :d="`M${p[0]} ${p[1] - 8}l8 8-8 8-8-8z`" fill="#bfbfbf" stroke="#111" stroke-width="1.600" />
            </svg>
            <div class="vscroll">
              <svg class="vtop" viewBox="0 0 30 60">
                <circle cx="13" cy="11" r="8" fill="none" stroke="#888" stroke-width="2" /><path d="M18 17l6 7" stroke="#777" stroke-width="3.500" /><path d="M9 8v7M13 8v2M13 13v2M16 8v7" stroke="#888" stroke-width="1.500" />
                <path d="M9 50l6-8 6 8" fill="none" stroke="#555" stroke-width="3" />
              </svg>
              <i class="vthumb"></i>
            </div>
          </div>
          <div class="hscroll">
            <svg class="hl" viewBox="0 0 10 14"><path d="M8 1L2 7l6 6" fill="none" stroke="#555" stroke-width="3" /></svg>
            <i class="hthumb"></i>
            <svg class="hr" viewBox="0 0 10 14"><path d="M2 1l6 6-6 6" fill="none" stroke="#555" stroke-width="3" /></svg>
          </div>
        </section>

        <section class="dock">
          <div class="dhead">
            <svg class="dico" viewBox="0 0 32 32" v-html="icons.fill"></svg>
            <span v-fit="301">Fill and Stroke (Shift+Ctrl+F)</span>
            <svg class="dbtns" viewBox="0 0 66 22">
              <g fill="none" stroke="#777" stroke-width="2"><rect x="1" y="1" width="20" height="20" rx="3" /><rect x="45" y="1" width="20" height="20" rx="3" /></g>
              <path d="M14 6v10l-7-5z" fill="#666" /><path d="M50 6l10 10M60 6L50 16" stroke="#555" stroke-width="4" />
            </svg>
          </div>
          <div class="tabs">
            <span class="tab cur"><i class="tfill"></i><span v-fit="30"><u>F</u>ill</span></span>
            <span class="tab tp"><i class="tstroke"></i><span v-fit="126">Stroke paint</span></span>
            <span class="tab ts"><svg viewBox="0 0 20 18"><path d="M0 4h18M0 15h20" stroke="#444" stroke-width="2.500" /><path d="M14 0l6 4-6 4z" fill="#444" /><path d="M0 10h20" stroke="#555" stroke-width="2" stroke-dasharray="3 2" /></svg><span v-fit="121">Stroke style</span></span>
          </div>
          <div class="pagebox">
            <div class="paints">
              <span class="pb none"><svg viewBox="0 0 22 22"><path d="M1 1h6l4 6 4-6h6l-6 10 6 10h-6l-4-6-4 6H1l6-10z" /></svg></span>
              <span class="pb act"><i class="sw flat"></i></span>
              <span class="pb"><i class="sw lin"></i></span>
              <span class="pb"><i class="sw rad"></i></span>
              <span class="pb"><svg class="swv" viewBox="0 0 40 40"><rect width="40" height="40" fill="#98b4d4" /><path d="M11 0l8 9-8 10-8-10zM29 0l8 9-8 10-8-10zM20 11l8 9-8 10-8-10zM2 11l8 9-8 10-8-10zM38 11l8 9-8 10-8-10zM11 22l8 9-8 10-8-10zM29 22l8 9-8 10-8-10z" fill="#fff" /><rect x="1" y="1" width="38" height="38" fill="none" stroke="#000" stroke-width="2" /></svg></span>
              <span class="pb"><i class="sw swa"></i></span>
              <span class="pb q"><svg viewBox="0 0 28 38"><path d="M1 13Q2 1 14 1t13 11q0 6-5 9t-4 5h-8q-1-6 4-9 4-2 4-5 0-4-4-4-4 1-4 6zM9 29h10v8H9z" /></svg></span>
              <span class="rule act"><svg viewBox="0 0 20 20"><path d="M1 1q4 2 5 0l3 3h2l3-3q2 2 5 0 2 13-6 18H7Q-1 14 1 1z" /><path d="M7 6h6q1 7-2 10H9Q6 13 7 6z" fill="#cce8ff" /></svg></span>
              <span class="rule"><svg viewBox="0 0 20 20"><path d="M1 1q4 2 5 0l3 3h2l3-3q2 2 5 0 2 13-6 18H7Q-1 14 1 1z" /></svg></span>
            </div>
            <div class="flatl"><b v-fit="100">Flat color</b></div>
            <div class="modes">
              <span v-for="(m, i) in modes" :key="m[0]" class="mode" :class="{ sel: i === 0, last: i === 4 }"><span v-fit="m[1]">{{ m[0] }}</span></span>
            </div>
            <div v-for="c in channels" :key="c.k" class="chan">
              <span class="cl"><span v-fit="19"><u>{{ c.k }}</u>:</span></span>
              <span class="slider"><i :style="{ background: c.c }"></i><svg class="mark" :class="{ end: c.k === 'A' }" viewBox="0 0 12 40"><path d="M0 0h12l-6 7zM0 40h12l-6-7z" fill="#000" stroke="#aaa" stroke-width="1.500" /></svg></span>
              <span class="num"><span v-fit="c.w">{{ c.v }}</span><span class="spin" :class="c.k === 'A' ? 'max' : 'min'"><i class="up"></i><i class="dn"></i></span></span>
            </div>
            <div class="rgba">
              <span class="cmsb"><svg viewBox="0 0 32 32"><rect width="32" height="32" fill="#dcdcdc" /><path d="M2 1l28 20L9 31z" fill="#8fb5a8" /><path d="M2 1l14 10-8 10z" fill="#4aa44a" /><path d="M30 21L18 27l-3-10z" fill="#c04060" /><path d="M9 31l-2-12 10 8z" fill="#4040b0" /><path d="M2 1l28 20L9 31z" fill="none" stroke="#444" stroke-width="1.500" stroke-dasharray="2 1" /></svg></span>
              <span class="cmsb"><svg viewBox="0 0 32 32"><circle cx="16" cy="16" r="10.500" fill="none" stroke="#b04545" stroke-width="10.500" /><circle cx="16" cy="16" r="10.500" fill="none" stroke="#6a3030" stroke-width="10.500" stroke-dasharray="1.500 2" stroke-opacity=".6" /><circle cx="16" cy="16" r="15" fill="none" stroke="#544" stroke-width="2" stroke-dasharray="3 1" /></svg></span>
              <svg class="dropper" viewBox="0 0 48 48" v-html="tools[18]"></svg>
              <span class="rl"><span v-fit="62">RGBA<u>:</u></span></span>
              <span class="hex"><span v-fit="88">000000ff</span></span>
            </div>
          </div>
          <div class="prog"><span class="pbox"><span v-fit="83">Blur (%)</span><span v-fit="31">0.0</span></span><span class="spin min"><i class="up"></i><i class="dn"></i></span></div>
          <div class="prog op"><span class="pbox"><span v-fit="123">Opacity (%)</span><span v-fit="53">100.0</span></span><span class="spin max"><i class="up"></i><i class="dn"></i></span></div>
        </section>

        <aside class="snapbar">
          <template v-for="(s, i) in snaps" :key="i">
            <span v-if="s.svg" class="snap" :class="{ act: s.on }"><svg viewBox="0 0 32 32" v-html="s.svg"></svg></span>
            <i v-else class="hs"></i>
          </template>
        </aside>
      </main>

      <div class="palette">
        <svg class="nocol" viewBox="0 0 28 28"><path d="M1 0l26 28M27 0L1 28" stroke="#7a1010" stroke-width="2.200" /></svg>
        <i v-for="(c, i) in palette" :key="i" :style="{ background: '#' + c }"></i>
      </div>
      <div class="pscroll">
        <svg viewBox="0 0 10 14"><path d="M8 1L2 7l6 6" fill="none" stroke="#b4b4b4" stroke-width="3" /></svg><i></i>
      </div>
      <footer class="status">
        <div class="labels"><span v-fit="34">Fill:</span><span v-fit="70">Stroke:</span></div>
        <div class="paintinfo"><i class="pf"></i><div class="ps"><i></i><span v-fit="66">0.0354</span></div></div>
        <span class="ol"><span v-fit="22">O:</span></span>
        <span class="onum"><span v-fit="12">0</span><span class="spin half"><i class="up"></i><i class="dn"></i></span></span>
        <i class="ssep"></i>
        <svg class="eye" viewBox="0 0 20 16"><path d="M1 9q9-10 18 0-9 9-18 0zM3 4l2 3M7 1l1 4M10 0v4M13 1l-1 4M17 4l-2 3" fill="#777" stroke="#444" stroke-width="1.500" /><circle cx="10" cy="9" r="3.500" fill="#222" /></svg>
        <svg class="lock" viewBox="0 0 16 18"><path d="M4 6V4q2-4 5-2 3 1 3 7" fill="none" stroke="#777" stroke-width="1.800" /><rect x="2" y="8" width="12" height="9" fill="#d8d4b0" stroke="#666" stroke-width="1.500" /><path d="M5 11h7M5 14h7" stroke="#999" /></svg>
        <span class="combo layer"><b v-fit="23">•0</b><i class="chev"><svg viewBox="0 0 20 12"><path d="M2 1l8 9 8-9" fill="none" stroke="#555" stroke-width="2.500" /></svg></i></span>
        <span class="msg"><span v-fit="516">Drag to select nodes, click to edit only this object</span></span>
        <i class="ssep2"></i>
        <div class="xy"><div><span v-fit="17">X:</span><code v-fit="84">598.05</code></div><div><span v-fit="17">Y:</span><code v-fit="84">628.48</code></div></div>
        <span class="zl"><span v-fit="17">Z:</span></span>
        <span class="znum"><span v-fit="54">131%</span></span><span class="spin zs"><i class="up"></i><i class="dn"></i></span>
        <svg class="grip" viewBox="0 0 16 16"><path d="M12 0h4v4h-4zM6 6h4v4H6zM12 6h4v4h-4zM0 12h4v4H0zM6 12h4v4H6zM12 12h4v4h-4z" fill="#bdbdbd" /></svg>
      </footer>
    </div>

    <aside class="taskbar">
      <svg class="stone" width="126" height="1824"><rect width="126" height="1824" filter="url(#stone)" /></svg>
      <div v-for="(t, i) in tasks" :key="i" class="task" :class="{ lit: t.lit, on: t.on, multi: i === 2 }"><svg viewBox="0 0 48 48" v-html="t.svg"></svg></div>
      <div class="tray t1">
        <svg class="lt" viewBox="0 0 14 26"><path d="M13 1L1 13l12 12" fill="none" stroke="#fff" stroke-width="2" /></svg>
        <svg class="db" viewBox="0 0 28 28"><path d="M7 0l7 5-7 4-7-4zM21 0l-7 5 7 4 7-4zM7 9l7 5-7 5-7-5zM21 9l-7 5 7 5 7-5zM6 20l8-5 8 5-8 6z" fill="#fff" /><circle cx="21.500" cy="22" r="6" fill="#2aa83a" /><path d="M18.500 22l2 2 4-4" fill="none" stroke="#fff" stroke-width="1.500" /></svg>
      </div>
      <svg class="tray pen" viewBox="0 0 32 32"><path d="M10 17Q1 16 1 23q0 7 10 7M11 30l1-9L23 2q4-3 6 2L18 25zM14 20q5-12 3-14t-2 5M27 12q5 0 4 5-2 4-9 5" fill="none" stroke="#fff" stroke-width="2" /></svg>
      <svg class="tray kb" viewBox="0 0 46 26"><rect x="1" y="1" width="44" height="24" fill="none" stroke="#fff" stroke-width="2" /><path d="M6 8h34M6 13h34" stroke="#fff" stroke-width="2" stroke-dasharray="3 2" /><path d="M6 18.500h4M12 18.500h21M36 18.500h4" stroke="#fff" stroke-width="2" /></svg>
      <div class="tray eng"><span v-fit="45">ENG</span></div>
      <div class="tray time"><span v-fit="84">3:07 PM</span></div>
      <div class="tray date"><span v-fit="95">8/8/2016</span></div>
      <i class="peek"></i>
    </aside>

    <svg class="toast" viewBox="1890 1570 720 214" width="720" height="214">
      <path d="M1902.500 1582L2611 1579V1777L1894.500 1773.500z" fill="#1f1f1f" stroke="#4a4a4a" stroke-width="2" />
      <g fill="#fff" stroke="#0c0c0c" stroke-width="2" paint-order="stroke">
        <path d="M1933 1629l21-15 15 12-20 14zM2006 1629l-22-16-15 13 20 14zM1932 1651l17-11 18 15-15 11zM2005 1651l-16-11-20 14 15 12zM1946 1666l6 3 16-13 16 14 6-4v7l-23 14-21-13z" />
      </g>
      <text x="2037" y="1626" fill="#fff" font-size="26.500" textLength="237">Screenshot Added</text>
      <text x="2037" y="1666" fill="#a2a2a2" font-size="26.500" textLength="422">A screenshot was added to your</text>
      <text x="2034" y="1705" fill="#a2a2a2" font-size="26.500" textLength="119">Dropbox.</text>
      <text x="2033" y="1745" fill="#a2a2a2" font-size="22" textLength="91">Dropbox</text>
    </svg>
  </div>
</template>

<style>
html, body { margin: 0; background: #fff; }
</style>

<style scoped>
* { box-sizing: border-box; }
.desktop { position: relative; display: flex; width: 2736px; height: 1824px; overflow: hidden; background: #fff; color: #000; font: 21px/28px "Open Sans", "Noto Sans", sans-serif; }
.defs { position: absolute; }
svg { display: block; flex: none; }
i { display: block; flex: none; }
u { text-decoration-thickness: 2px; text-underline-offset: 3px; text-decoration-skip-ink: none; }
span { white-space: nowrap; }
b, code, span > span, .labels span, .ps span, .xy span, .title span { display: inline-block; flex: none; white-space: nowrap; }
.window { display: flex; flex-direction: column; width: 2610px; height: 1824px; flex: none; }
.title { display: flex; align-items: center; height: 48px; padding-left: 0; }
.app-ico { width: 34px; height: 42px; margin-right: 6px; }
.title span { margin-top: 1px; }
.winbtns { width: 210px; height: 24px; margin-left: auto; margin-right: 36px; margin-top: -4px; }
.menu { display: flex; align-items: center; height: 40px; padding-left: 16px; border-bottom: 2px solid #dcdcdc; }
.bar { display: flex; align-items: center; padding-left: 4px; border-bottom: 2px solid #dcdcdc; flex: none; }
.bar1 { height: 60px; padding-top: 2px; }
.bar2 { height: 64px; padding-top: 1px; }
.cell { display: flex; width: 52px; height: 54px; align-items: center; justify-content: center; flex: none; }
.i32 { width: 32px; height: 32px; }
.vs { width: 24px; height: 32px; background: linear-gradient(#aaa, #aaa) 11px 0/2px 100% no-repeat; }
.bar2 .vs { height: 36px; }
.cell.drop { width: 49px; padding-right: 3px; }
.tri { border: 7px solid transparent; border-top: 8px solid #000; border-bottom: 0; }
.act { background: #cce8ff; border: 2px solid #99d1ff; }
.cell.act { width: 52px; margin-right: -1px; }
.coord b { font-weight: 400; color: #777; }
.cx { margin-left: 16px; margin-right: 11px; }
.cy { margin: 0 10px 0 16px; }
.field { display: flex; align-items: center; position: relative; width: 112px; height: 42px; border: 3px solid #abadb3; border-right: 0; padding-left: 6px; background: #f0f0f0; color: #777; }
.field .spin { margin: -3px 0 -3px auto; height: 42px; background: #f0f0f0; }
.spin { display: flex; flex-direction: column; width: 22px; height: 44px; gap: 2px; padding: 1px 1px; background: #f0f0f0; flex: none; }
.spin i { flex: 1; width: 20px; border: 2px solid #acacac; background: #f0f0f0; position: relative; }
.spin i::after { content: ""; position: absolute; left: 3px; top: 50%; margin-top: -3px; border: 5px solid transparent; }
.spin .up::after { border-bottom: 6px solid #000; border-top: 0; }
.spin .dn::after { border-top: 6px solid #000; border-bottom: 0; }
.spin.off i, .spin.min .dn, .spin.max .up, .spin.half .up { border-color: #dcdcdc; }
.spin.off .up::after, .spin.max .up::after, .spin.half .up::after { border-bottom-color: #666; }
.spin.off .dn::after, .spin.min .dn::after { border-top-color: #666; }
.combo { display: flex; align-items: center; background: #fff; border: 3px solid #abadb3; flex: none; }
.combo.unit { width: 86px; height: 39px; padding-left: 5px; }
.chev { display: flex; align-items: center; justify-content: center; margin-left: auto; align-self: stretch; width: 32px; background: #e1e1e1; border-left: 2px solid #abadb3; }
.chev svg { width: 16px; height: 11px; }
.vs.s2 { width: 26px; background-position: 9px 0; }
.vs.s3 { width: 22px; background-position: 8px 0; }

.main { display: flex; height: 1488px; flex: none; }
.toolbox { width: 72px; padding-top: 4px; border-right: 4px solid #f0f0f0; flex: none; }
.tool { display: flex; align-items: center; justify-content: center; width: 60px; height: 60px; margin-left: 4px; }
.tool svg { width: 48px; height: 48px; }
.tool.act { border-width: 2px; height: 58px; margin-bottom: 2px; }
.view { width: 1884px; display: flex; flex-direction: column; border-top: 2px solid #f0f0f0; flex: none; }
.viewrow { display: flex; height: 1456px; }
.canvas { height: 1454px; }
.vscroll { width: 42px; background: #f0f0f0; }
.vtop { width: 30px; height: 60px; }
.vthumb { width: 30px; height: 322px; margin-top: 458px; background: #cdcdcd; }
.hscroll { display: flex; align-items: center; height: 30px; background: #f0f0f0; margin-left: -4px; padding-left: 13px; }
.hl, .hr { width: 10px; height: 16px; }
.hthumb { width: 380px; height: 30px; margin-left: 723px; background: #cdcdcd; }
.hr { margin-left: 697px; }

.dock { width: 594px; margin-top: 0; border-top: 2px solid #a0a0a0; border-left: 2px solid #a0a0a0; background: #f0f0f0; flex: none; box-shadow: inset 2px 2px #000; position: relative; padding-left: 2px; border-right: 4px solid #fff; }
.dhead { display: flex; align-items: center; height: 49px; border-bottom: 2px solid #a0a0a0; padding: 0 10px 0 1px; margin-right: 4px; }
.dico { width: 26px; height: 27px; }
.dbtns { width: 66px; height: 22px; margin-left: auto; margin-top: -1px; }
.tabs { display: flex; align-items: flex-end; height: 55px; padding-left: 10px; }
.tab { display: flex; align-items: center; height: 44px; padding-top: 3px; border: 2px solid #d9d9d9; border-bottom: 0; border-left: 0; }
.tab.cur { width: 84px; height: 50px; background: #fff; border-left: 2px solid #d9d9d9; padding: 0 0 0 8px; position: relative; top: 2px; }
.tfill { width: 18px; height: 18px; margin-right: 10px; background: linear-gradient(135deg, #a6c2e0, #f6fafd); }
.tab.tp { width: 167px; padding-left: 2px; }
.tab.ts { width: 167px; padding-left: 7px; }
.tstroke { width: 18px; height: 18px; margin-right: 10px; border: 2px solid #777; border-right-color: #ccc; border-bottom-color: #ccc; background: #fff; }
.ts svg { width: 20px; height: 18px; margin-right: 8px; }
.pagebox { width: 564px; height: 906px; margin-left: 10px; border: 2px solid #d9d9d9; background: #fff; }
.paints { display: flex; align-items: center; height: 58px; margin-top: 16px; padding-left: 14px; }
.pb { display: flex; align-items: center; justify-content: center; width: 60px; height: 58px; flex: none; }
.none svg { width: 22px; height: 22px; }
.sw { width: 40px; height: 40px; border: 2px solid #000; }
.swv { width: 40px; height: 40px; }
.flat { background: #98b4d4; }
.lin { background: linear-gradient(100deg, #98b4d4, #fff 85%); }
.rad { background: radial-gradient(circle, #fff, #98b4d4 65%); }
.swa { background: #98b4d4; padding: 4px; }
.swa::before { content: ""; display: block; width: 28px; height: 28px; background: #fff; border: 2px solid #e8eef5; border-right: 3px solid #666; border-bottom: 3px solid #666; }
.q svg { width: 28px; height: 38px; }
.rule { display: flex; align-items: center; justify-content: center; width: 38px; height: 58px; }
.rule.act { margin-left: 36px; }
.rule svg { width: 19px; height: 18px; }
.flatl { margin: 19px 0 0 15px; height: 28px; }
.flatl b { font-weight: 700; font-size: 20px; }
.modes { display: flex; gap: 8px; margin: 13px 0 0 16px; }
.mode { display: flex; align-items: center; justify-content: center; width: 98px; height: 42px; background: #e1e1e1; border: 2px solid #adadad; flex: none; }
.mode.last { width: 104px; }
.mode.sel { background: #cce4f7; border-color: #0055a0; }
.chan { display: flex; height: 50px; align-items: flex-start; }
.modes + .chan { margin-top: 16px; }
.cl { width: 51px; padding: 9px 0 0 0; text-align: right; margin-right: 17px; }
.slider { position: relative; width: 345px; height: 44px; border: 2px solid #a0a0a0; border-right-color: #f0f0f0; border-bottom-color: #f0f0f0; flex: none; }
.slider > i { height: 40px; border: 2px solid #000; border-bottom: 0; background-origin: padding-box; background-clip: padding-box; }
.mark { position: absolute; left: 0; top: 2px; width: 12px; height: 38px; }
.mark.end { left: auto; right: 1px; }
.num { display: flex; align-items: center; width: 99px; height: 46px; margin-left: 17px; border: 2px solid #abadb3; border-right: 0; padding-left: 7px; }
.num .spin { margin-left: auto; height: 46px; width: 24px; padding: 2px; background: #f5f5f5; }
.rgba { display: flex; align-items: center; height: 52px; margin-top: 448px; padding-left: 18px; }
.cmsb { display: flex; align-items: center; width: 32px; height: 51px; background: #f0f0f0; margin-right: 8px; }
.cmsb svg { width: 32px; height: 32px; }
.dropper { width: 32px; height: 34px; margin-left: 10px; }
.rl { margin-left: 227px; margin-right: 5px; }
.hex { display: flex; align-items: center; justify-content: center; width: 112px; height: 42px; border: 2px solid #abadb3; }
.prog { display: flex; align-items: center; height: 48px; margin: 8px 0 0 10px; }
.pbox { display: flex; align-items: center; justify-content: space-between; width: 540px; height: 48px; padding: 0 8px 5px 11px; background: #fff; border: 2px solid #abadb3; border-right: 0; margin-right: 1px; }
.op { margin-top: 8px; }
.op .pbox { background: linear-gradient(#b6c3cf, #b6c3cf) 4px 3px/529px 37px no-repeat, linear-gradient(#000, #000) 3px 3px/532px 39px no-repeat, #fff; }

.snapbar { display: flex; flex-direction: column; align-items: center; width: 60px; padding-top: 3px; border-left: 0; }
.snap { display: flex; align-items: center; justify-content: center; width: 52px; height: 50px; margin: 1px 0; flex: none; }
.snap svg { width: 32px; height: 32px; }
.hs { width: 32px; height: 24px; background: linear-gradient(#aaa, #aaa) 0 11px/100% 2px no-repeat; }

.palette { display: flex; height: 34px; border-top: 2px solid #a0a0a0; box-shadow: inset 0 2px #000; padding: 2px 0 0 4px; overflow: hidden; width: 1944px; margin-top: 2px; flex: none; }
.palette i { width: 28px; height: 28px; }
.nocol { width: 28px; height: 28px; }
.pscroll { display: flex; align-items: center; height: 34px; border-top: 6px double #fff; background: #f0f0f0; padding-left: 10px; flex: none; }
.pscroll svg { width: 12px; height: 16px; margin-right: 12px; }
.pscroll i { width: 538px; height: 28px; background: #cdcdcd; }
.status { display: flex; align-items: flex-start; height: 54px; background: #f0f0f0; padding-top: 2px; flex: none; }
.labels { display: flex; flex-direction: column; align-items: flex-start; width: 80px; margin-left: 4px; line-height: 26px; }
.paintinfo { width: 160px; line-height: 26px; }
.pf { width: 160px; height: 26px; background: #000; }
.ps { display: flex; justify-content: space-between; }
.ps i { width: 88px; height: 26px; background: #00f; }
.ol { margin: 11px 0 0 8px; }
.onum { display: flex; align-items: center; width: 94px; height: 42px; margin: 4px 0 0 6px; background: #fff; border: 2px solid #abadb3; border-right: 0; padding-left: 7px; }
.onum .spin { height: 42px; margin-left: auto; }
.ssep { width: 2px; height: 52px; margin-left: 6px; background: #aaa; }
.eye { width: 20px; height: 16px; margin: 17px 0 0 9px; }
.lock { width: 16px; height: 20px; margin: 14px 0 0 12px; }
.combo.layer { width: 120px; height: 52px; margin-left: 6px; padding-left: 6px; }
.msg { margin: 11px 0 0 11px; }
.ssep2 { width: 2px; height: 52px; background: #aaa; margin-left: 1198px; }
.xy { margin: -1px 0 0 6px; line-height: 25px; }
.xy div { display: flex; gap: 18px; height: 25px; }
code { font: 22px/25px "DejaVu Sans Mono", "Liberation Mono", monospace; }
.zl { margin: 8px 0 0 18px; }
.znum { display: flex; align-items: center; width: 91px; height: 42px; margin: 4px 0 0 5px; padding-left: 12px; background: #fff; border: 2px solid #abadb3; border-right: 0; }
.zs { height: 42px; margin: 4px 0 0 0; }
.grip { width: 16px; height: 16px; margin: 28px 0 0 16px; }

.taskbar { position: relative; display: flex; flex-direction: column; width: 126px; height: 1824px; background: #070707; overflow: hidden; color: #fff; flex: none; }
.stone { position: absolute; left: 0; top: 0; }
.task { position: relative; display: flex; align-items: center; justify-content: center; height: 94px; flex: none; }
.task:nth-of-type(1) { margin-top: -8px; }
.task svg { width: 48px; height: 48px; }
.task.lit::after { content: ""; position: absolute; right: 0; top: 8px; width: 4px; height: 76px; background: #ffd0a6; }
.task.multi::after { width: 8px; background: linear-gradient(90deg, #c9a283 5px, #8b7059 5px 6px, #c9a283 6px); }
.task.on { background: rgba(90, 90, 90, .55); }
.task.on::after { top: 0; height: 94px; }
.tray { position: relative; flex: none; }
.t1 { display: flex; align-items: center; height: 32px; margin-top: 487px; padding-left: 35px; }
.lt { width: 14px; height: 26px; }
.db { width: 28px; height: 28px; margin-left: 43px; }
.pen { width: 32px; height: 32px; margin: 40px 0 0 47px; }
.kb { width: 46px; height: 26px; margin: 51px 0 0 40px; }
.eng { text-align: center; height: 28px; margin-top: 48px; }
.time { text-align: center; height: 28px; margin-top: 48px; }
.date { text-align: center; height: 28px; margin-top: 8px; }
.tray span { display: inline-block; }
.peek { position: relative; height: 2px; background: #555; margin-top: 24px; }
.toast { position: absolute; left: 1890px; top: 1570px; }
</style>
